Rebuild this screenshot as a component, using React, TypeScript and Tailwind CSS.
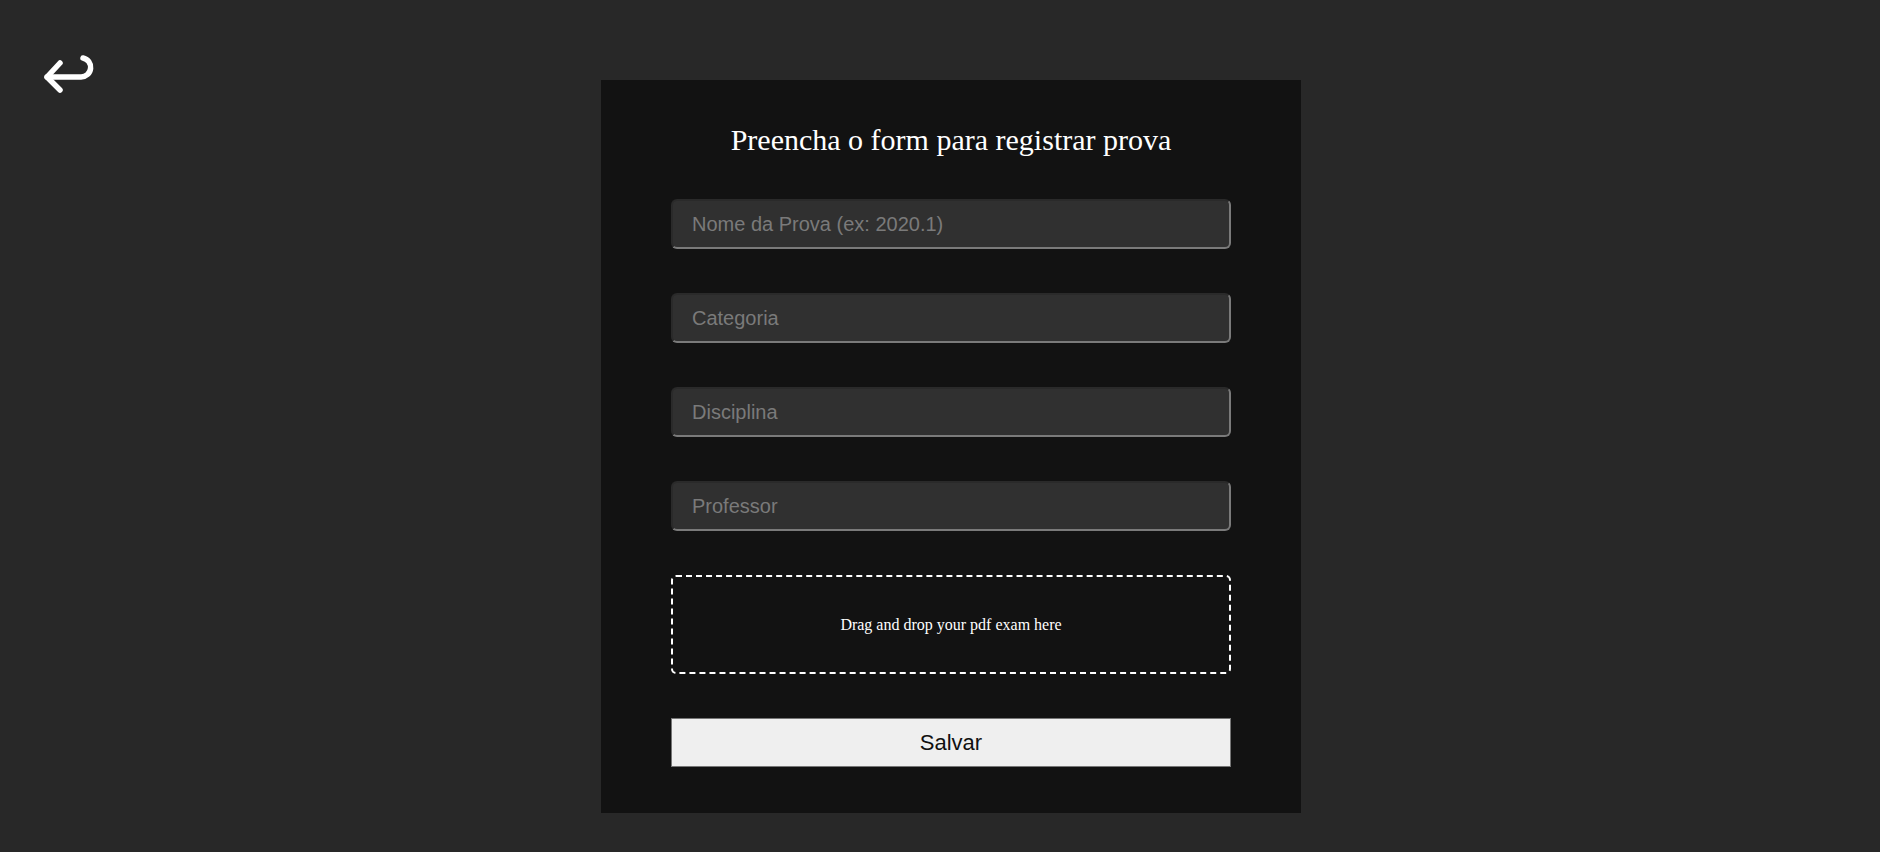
import React from 'react'

const fields = ['Nome da Prova (ex: 2020.1)', 'Categoria', 'Disciplina', 'Professor']

function BackArrow() {
  return (
    <svg width="60" height="44" viewBox="0 0 60 44" fill="none" stroke="white" strokeWidth="5.5" strokeLinecap="round" strokeLinejoin="round">
      <path d="M18 11 L5 25 L18 38" />
      <path d="M5 25 H39 A9.6 9.6 0 0 0 41 6" />
    </svg>
  )
}

export default function App() {
  return (
    <div className="h-[852px] bg-[#282828] grid grid-cols-[601px_700px_1fr]" style={{ fontFamily: '"Liberation Sans", Arial, sans-serif' }}>
      {/* back button */}
      <div className="pt-[52px] pl-[42px]">
        <button className="block">
          <BackArrow />
        </button>
      </div>

      <div className="mt-[80px] h-[733px] bg-[#121212] flex flex-col items-center pt-[43px]">
        <h1 className="text-[30px] text-white leading-[34px]" style={{ fontFamily: '"Liberation Serif", "Times New Roman", serif' }}>
          Preencha o form para registrar prova
        </h1>

        <form className="w-[560px] mt-[42px] flex flex-col gap-[44px]">
          {fields.map((f) => (
            <input
              key={f}
              placeholder={f}
              className="h-[50px] w-full rounded-[6px] bg-[#303030] border-2 border-t-[#2a2a2a] border-l-[#2a2a2a] border-b-[#7a7a7a] border-r-[#7a7a7a] px-[19px] text-[20px] text-white placeholder:text-[#7a7a7a] outline-none"
            />
          ))}

          <div className="h-[99px] rounded-[5px] border-2 border-dashed border-white flex items-center justify-center">
            <span className="text-[16px] text-white" style={{ fontFamily: '"Liberation Serif", "Times New Roman", serif' }}>
              Drag and drop your pdf exam here
            </span>
          </div>

          <button type="button" className="h-[49px] w-full bg-[#efefef] border border-[#767676] text-[22px] text-[#111]">
            Salvar
          </button>
        </form>
      </div>

      <div />
    </div>
  )
}
